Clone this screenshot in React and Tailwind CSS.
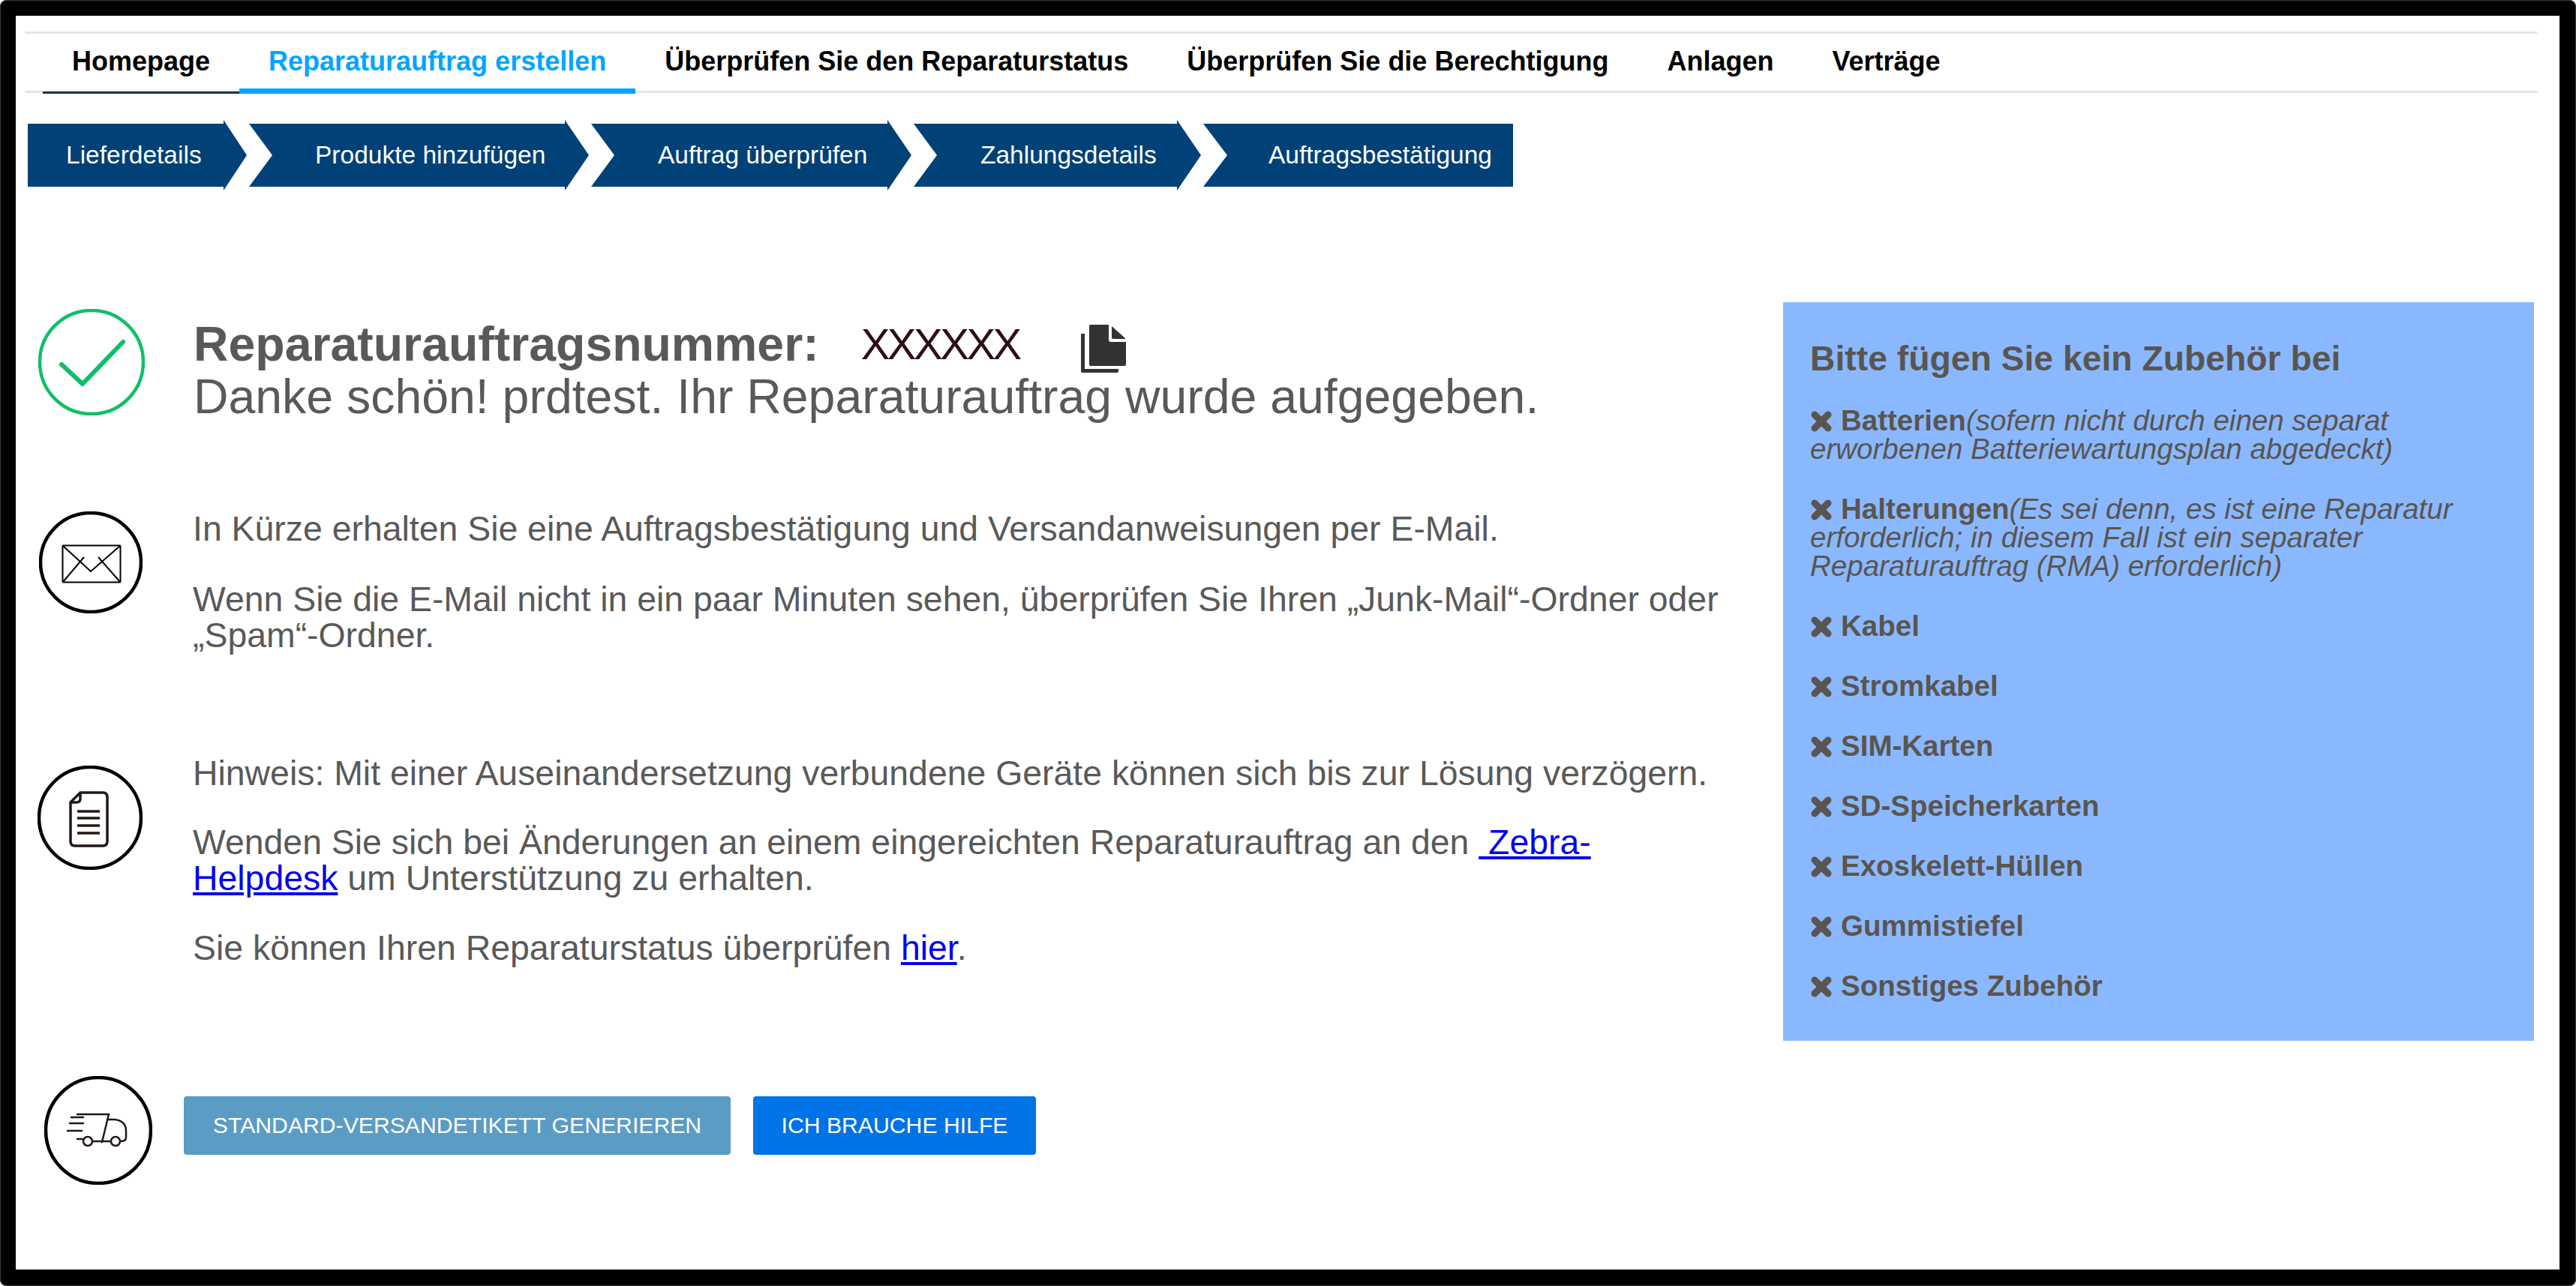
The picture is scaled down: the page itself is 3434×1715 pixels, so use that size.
const navItems = [
  { label: "Homepage", cls: "text-black border-b-[3px] border-[#17384a] pb-[21px]" },
  { label: "Reparaturauftrag erstellen", cls: "text-[#00a5ff] border-b-[7px] border-[#00a5ff] pb-[17px]" },
  { label: "Überprüfen Sie den Reparaturstatus", cls: "text-black pb-[24px]" },
  { label: "Überprüfen Sie die Berechtigung", cls: "text-black pb-[24px]" },
  { label: "Anlagen", cls: "text-black pb-[24px]" },
  { label: "Verträge", cls: "text-black pb-[24px]" },
];

const firstStep = "[clip-path:polygon(0_5px,calc(100%-31px)_5px,calc(100%-31px)_0,100%_47px,calc(100%-31px)_94px,calc(100%-31px)_89px,0_89px)]";
const midStep = "[clip-path:polygon(0_5px,calc(100%-32px)_5px,calc(100%-32px)_0,100%_47px,calc(100%-32px)_94px,calc(100%-32px)_89px,0_89px,31px_47px)]";
const lastStep = "[clip-path:polygon(0_5px,100%_5px,100%_89px,0_89px,32px_47px)]";

const steps = [
  { label: "Lieferdetails", cls: `w-[292px] pl-[51px] ${firstStep}` },
  { label: "Produkte hinzufügen", cls: `w-[453px] pl-[88px] ${midStep}` },
  { label: "Auftrag überprüfen", cls: `w-[427px] pl-[89px] ${midStep}` },
  { label: "Zahlungsdetails", cls: `w-[383px] pl-[89px] ${midStep}` },
  { label: "Auftragsbestätigung", cls: `w-[413px] pl-[87px] ${lastStep}` },
];

const simpleItems = ["Kabel", "Stromkabel", "SIM-Karten", "SD-Speicherkarten", "Exoskelett-Hüllen", "Gummistiefel", "Sonstiges Zubehör"];

function Cross() {
  return (
    <svg viewBox="0 0 30 28" className="inline-block w-[30px] h-[28px] mr-[11px] align-[-2px]" fill="none" stroke="#5a5550" strokeWidth="9" strokeLinecap="round">
      <path d="M6 5 L24 23 M24 5 L6 23" />
    </svg>
  );
}

function CheckIcon() {
  return (
    <svg viewBox="0 0 142 142" className="w-[142px] h-[142px] shrink-0" fill="none">
      <ellipse cx="71" cy="71" rx="69" ry="69" stroke="#0fbf68" strokeWidth="4.5" />
      <path d="M31 74 L59 100 L113 44" stroke="#0fbf68" strokeWidth="6" strokeLinecap="round" strokeLinejoin="round" />
    </svg>
  );
}

function MailIcon() {
  return (
    <svg viewBox="0 0 138 136" className="w-[138px] h-[136px] shrink-0" fill="none" stroke="#000">
      <ellipse cx="69" cy="68" rx="67" ry="66" strokeWidth="4.5" />
      <rect x="31.5" y="45.5" width="77" height="49" rx="1" strokeWidth="2" />
      <path d="M32 46 L69 80 L108 46 M32 94 L60 61 M108 94 L79 61" strokeWidth="2" />
    </svg>
  );
}

function DocIcon() {
  return (
    <svg viewBox="0 0 140 139" className="w-[140px] h-[139px] shrink-0" fill="none" stroke="#000">
      <ellipse cx="70" cy="69.5" rx="68" ry="67.5" strokeWidth="4.5" />
      <g stroke="#231815" strokeWidth="3.5">
        <path d="M57 36 H87 q6 0 6 6 V101 q0 6 -6 6 H50 q-6 0 -6 -6 V49 Z" />
        <path d="M57 36 V44 q0 5 -5 5 H44" />
        <path d="M53 61 H83 M53 70 H83 M53 80 H83 M53 90 H83" />
      </g>
    </svg>
  );
}

function TruckIcon() {
  return (
    <svg viewBox="0 0 144 145" className="w-[144px] h-[145px] shrink-0" fill="none" stroke="#000">
      <ellipse cx="72" cy="72.5" rx="70" ry="70.5" strokeWidth="4.5" />
      <g stroke="#231815" strokeWidth="2.5" strokeLinecap="round">
        <path d="M44 51 H86 L77 88" />
        <path d="M84 58 H94 Q109 60 109 73 V82 Q109 87 102 87" />
        <path d="M64 87 H89" />
        <circle cx="58" cy="87" r="6" />
        <circle cx="95" cy="87" r="6" />
        <path d="M36 55 H52 M34 63 H52 M31 73 H50 M44 84 H51" />
      </g>
    </svg>
  );
}

function CopyIcon() {
  return (
    <svg viewBox="0 0 60 64" className="w-[60px] h-[64px] ml-[82px] mt-[9px] shrink-0" fill="#333">
      <path d="M11 2 q0 -2 2 -2 H37 V20 q0 3 3 3 H60 V53 q0 2 -2 2 H13 q-2 0 -2 -2 Z" />
      <path d="M41 2 L60 19 H43 q-2 0 -2 -2 Z" />
      <path d="M0 12 h5 V59 H50 V62 q0 2 -2 2 H2 q-2 0 -2 -2 Z" />
    </svg>
  );
}

export default function App() {
  return (
    <div className="w-[3434px] h-[1715px] bg-white font-['Liberation_Sans',Arial,sans-serif]">
      <div className="w-full h-full bg-black rounded-[8px] border border-[#3a3a3a] p-[20px] pr-[21px] pb-[21px]">
        <div className="w-full h-full bg-white pt-[21px]">
          <nav className="ml-[12px] mr-[29px] h-[82px] border-y-[3px] border-[#e4e4e4]">
            <ul className="flex pl-[24px] text-[36px] font-bold leading-[40px]">
              {navItems.map((item) => (
                <li key={item.label} className={`px-[39px] pt-[17px] h-[80px] whitespace-nowrap ${item.cls}`}>
                  {item.label}
                </li>
              ))}
            </ul>
          </nav>

          <div className="flex gap-[3px] ml-[16px] mt-[36px]">
            {steps.map((step) => (
              <div key={step.label} className={`h-[94px] bg-[#004178] text-white text-[33.5px] leading-[94px] whitespace-nowrap ${step.cls}`}>
                {step.label}
              </div>
            ))}
          </div>

          <div className="flex justify-between pl-[30px] pr-[34px] mt-[149px] text-[#595959]">
            <div>
              <div className="flex items-start pt-[9px]">
                <CheckIcon />
                <div className="ml-[65px] mt-[12px] text-[64.4px] leading-[70px] whitespace-nowrap">
                  <div className="flex items-start h-[70px]">
                    <strong className="font-bold">Reparaturauftragsnummer:</strong>
                    <span className="ml-[56px] text-[58px] text-[#2e0e14] tracking-[-3.5px]">XXXXXX</span>
                    <CopyIcon />
                  </div>
                  <div>Danke schön! prdtest. Ihr Reparaturauftrag wurde aufgegeben.</div>
                </div>
              </div>

              <div className="flex items-start mt-[117px] text-[46.4px] leading-[48px]">
                <div className="ml-[1px] mt-[1px]"><MailIcon /></div>
                <div className="ml-[67px] w-[2060px]">
                  <p>In Kürze erhalten Sie eine Auftragsbestätigung und Versandanweisungen per E-Mail.</p>
                  <p className="mt-[46px]">Wenn Sie die E-Mail nicht in ein paar Minuten sehen, überprüfen Sie Ihren „Junk-Mail“-Ordner oder „Spam“-Ordner.</p>
                </div>
              </div>

              <div className="flex items-start mt-[136px] text-[46.4px] leading-[48px]">
                <div className="ml-[-1px] mt-[14px]"><DocIcon /></div>
                <div className="ml-[67px] w-[1960px]">
                  <p className="whitespace-nowrap">Hinweis: Mit einer Auseinandersetzung verbundene Geräte können sich bis zur Lösung verzögern.</p>
                  <p className="mt-[44px]">
                    Wenden Sie sich bei Änderungen an einem eingereichten Reparaturauftrag an den{" "}
                    <a href="#" className="text-[#0000ee] underline">&nbsp;Zebra-Helpdesk</a> um Unterstützung zu erhalten.
                  </p>
                  <p className="mt-[45px]">
                    Sie können Ihren Reparaturstatus überprüfen <a href="#" className="text-[#0000ee] underline">hier</a>.
                  </p>
                </div>
              </div>

              <div className="flex items-start mt-[147px] pl-[8px]">
                <TruckIcon />
                <div className="flex gap-[30px] ml-[42px] mt-[27px] text-white text-[30.2px] font-medium">
                  <button className="w-[729px] h-[78px] rounded-[4px] bg-[#5b9cc5]">STANDARD-VERSANDETIKETT GENERIEREN</button>
                  <button className="w-[377px] h-[78px] rounded-[4px] bg-[#0073e6]">ICH BRAUCHE HILFE</button>
                </div>
              </div>
            </div>

            <aside className="w-[1001px] h-[985px] bg-[#8ab8ff] pl-[36px] pr-[36px] pt-[50px] text-[#5a5550]">
              <h2 className="text-[46.3px] leading-[50px] font-bold whitespace-nowrap">Bitte fügen Sie kein Zubehör bei</h2>
              <div className="mt-[39px] text-[38.5px] leading-[38px] flex flex-col gap-[42px]">
                <p>
                  <Cross /><strong>Batterien</strong><em>(sofern nicht durch einen separat erworbenen Batteriewartungsplan abgedeckt)</em>
                </p>
                <p>
                  <Cross /><strong>Halterungen</strong><em>(Es sei denn, es ist eine Reparatur erforderlich; in diesem Fall ist ein separater Reparaturauftrag (RMA) erforderlich)</em>
                </p>
                {simpleItems.map((item) => (
                  <p key={item}><Cross /><strong>{item}</strong></p>
                ))}
              </div>
            </aside>
          </div>
        </div>
      </div>
    </div>
  );
}
